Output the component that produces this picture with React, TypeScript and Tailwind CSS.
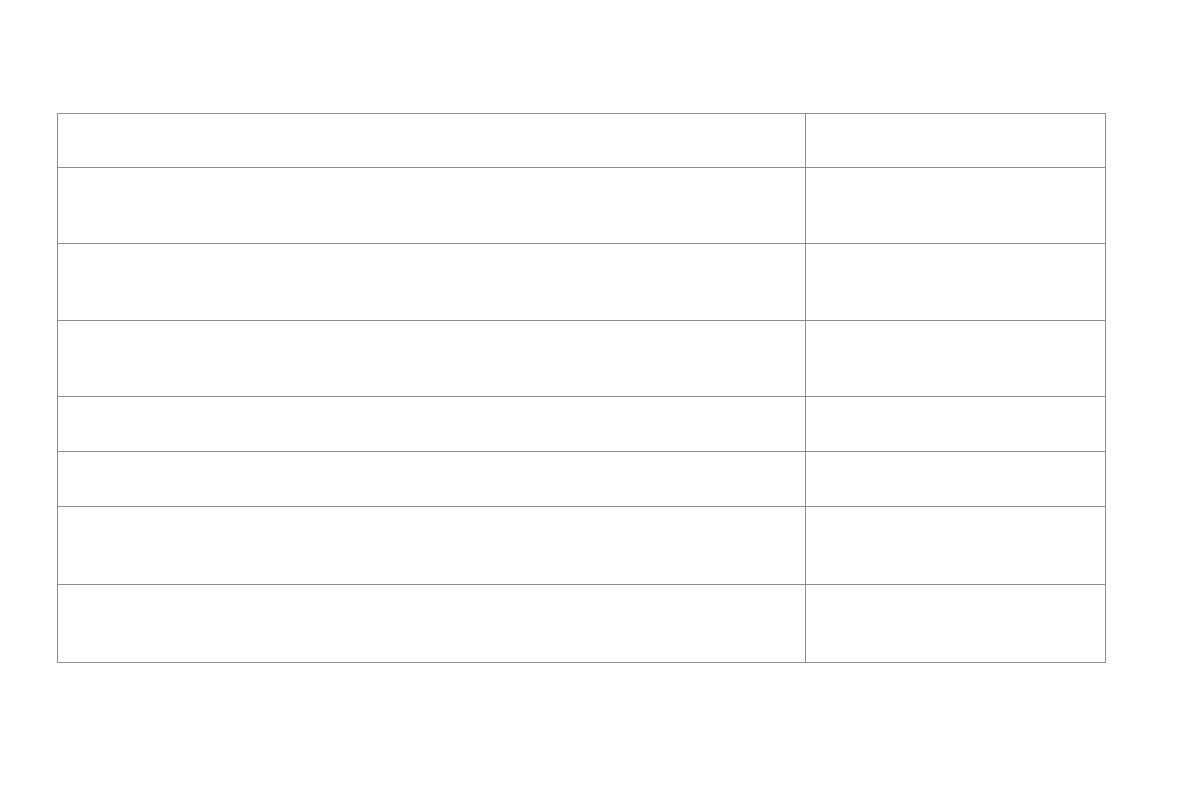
const ROWS = [54, 76, 77, 76, 55, 55, 78, 78]

const ROW_CLASSES: Record<number, string> = {
    54: 'h-[54px]',
    55: 'h-[55px]',
    76: 'h-[76px]',
    77: 'h-[77px]',
    78: 'h-[78px]',
}

export default function App() {
    return (
        <div className="min-h-screen w-full bg-white pt-[113px] pl-[57px]" style={{ fontFamily: '"Liberation Sans", Arial, sans-serif' }}>
            <div className="w-[1049px] border-t border-l border-r border-[#8e8e8e]">
                {ROWS.map((h, i) => (
                    <div key={i} className={`flex border-b border-[#8e8e8e] ${ROW_CLASSES[h]}`}>
                        <div className="w-[748px] border-r border-[#8e8e8e]" />
                        <div className="flex-1" />
                    </div>
                ))}
            </div>
        </div>
    )
}
